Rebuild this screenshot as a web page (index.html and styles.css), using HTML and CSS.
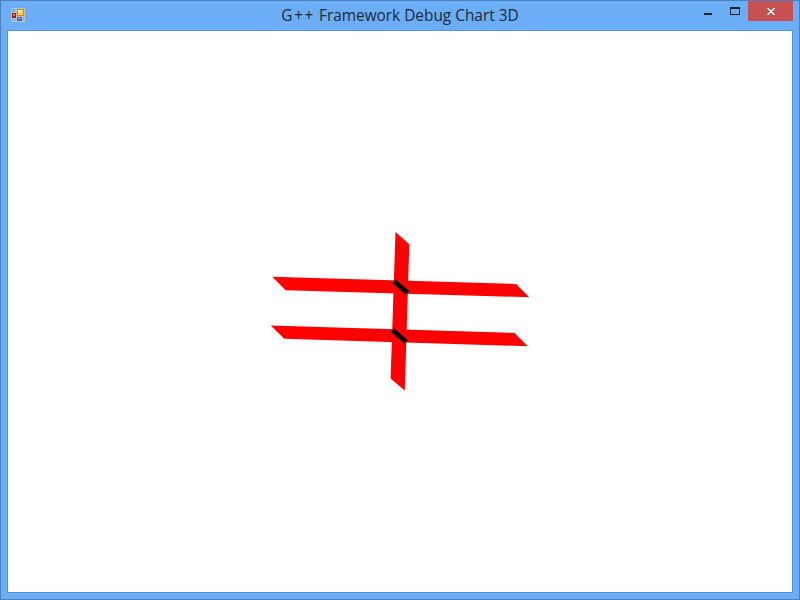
FILE: index.html
```
<!DOCTYPE html>
<html lang="en">
<head>
<meta charset="utf-8">
<title>G++ Framework Debug Chart 3D</title>
<link rel="stylesheet" href="styles.css">
</head>
<body>
<div class="window">
  <header class="titlebar">
    <svg class="app-icon" width="14" height="14" viewBox="0 0 14 14" shape-rendering="crispEdges">
      <path fill="#c0beb9" d="M0 0h14v14H0z"/>
      <path fill="#6dadf6" d="M1 1h3v3H1zM1 11h3v2H1zM12 9h1v4h-1z"/>
      <path fill="#a51b12" d="M1 5h4v5H1z"/>
      <path fill="#e9715e" d="M2 6h2v2H2z"/>
      <path fill="#c58e12" d="M6 1h7v7H6z"/>
      <path fill="#ffd34d" d="M7 2h5v5H7z"/>
      <path fill="#fff0a8" d="M7 2h3v2H7z"/>
      <path fill="#3567c9" d="M6 9h5v4H6z"/>
      <path fill="#8db4f5" d="M7 10h3v1H7z"/>
    </svg>
    <h1 class="title"><span class="brand">G++</span> Framework Debug Chart 3D</h1>
    <div class="controls">
      <span class="control minimize"><i class="bar"></i></span>
      <span class="control maximize"><i class="box"></i></span>
      <span class="control close">
        <svg width="8" height="7" viewBox="0 0 8 7" shape-rendering="crispEdges"><path fill="#fff" d="M0 0h2v1h1v1h2V1h1V0h2v1H7v1H6v1H5v1h1v1h1v1h1v1H6V6H5V5H3v1H2v1H0V6h1V5h1V4h1V3H2V2H1V1H0z"/></svg>
      </span>
    </div>
  </header>
  <main class="client">
    <svg class="chart" width="784" height="561" viewBox="8 31 784 561">
      <g fill="#f00">
        <path d="M395.5 232L409.3 244.3 404.8 390.6 390.6 378.5Z"/>
        <path d="M272.2 276.8L516 284 529.3 297.2 285.7 290.2Z"/>
        <path d="M270.7 325.4L514.6 332.9 527.6 346.2 284.3 338.8Z"/>
      </g>
      <g stroke="#000" stroke-width="4.9">
        <path d="M394 281.2L407.6 293.2"/>
        <path d="M392.4 330L406.2 342"/>
      </g>
    </svg>
  </main>
</div>
</body>
</html>
```
FILE: styles.css
```
* { box-sizing: border-box; }
body { margin: 0; }
.window {
  display: flex;
  flex-direction: column;
  width: 800px;
  height: 600px;
  border: 1px solid #4c81ba;
  background: #6badf6;
  padding: 0 6px 6px;
}
.titlebar {
  display: grid;
  grid-template-columns: 100px 1fr 100px;
  height: 29px;
  flex: none;
}
.app-icon { margin: 7px 0 0 4px; }
.title {
  margin: 3px 0 0;
  font: 400 15.4px/24px "Open Sans", "Noto Sans", sans-serif;
  color: #222a33;
  text-align: center;
  white-space: nowrap;
}
.brand { letter-spacing: 1.6px; }
.controls {
  display: flex;
  justify-content: flex-end;
  height: 20px;
}
.control { display: block; width: 27px; }
.bar {
  display: block;
  width: 8px;
  height: 2px;
  margin: 12px 0 0 10px;
  background: #222;
}
.box {
  display: block;
  width: 10px;
  height: 8px;
  margin: 6px 0 0 9px;
  border: 1px solid #222;
  border-top-width: 2px;
}
.close {
  display: flex;
  width: 45px;
  justify-content: center;
  padding-top: 7px;
  background: #c75050;
}
.client {
  flex: 1;
  border: 1px solid #5792d1;
  background: #fff;
}
.chart { display: block; }
```
